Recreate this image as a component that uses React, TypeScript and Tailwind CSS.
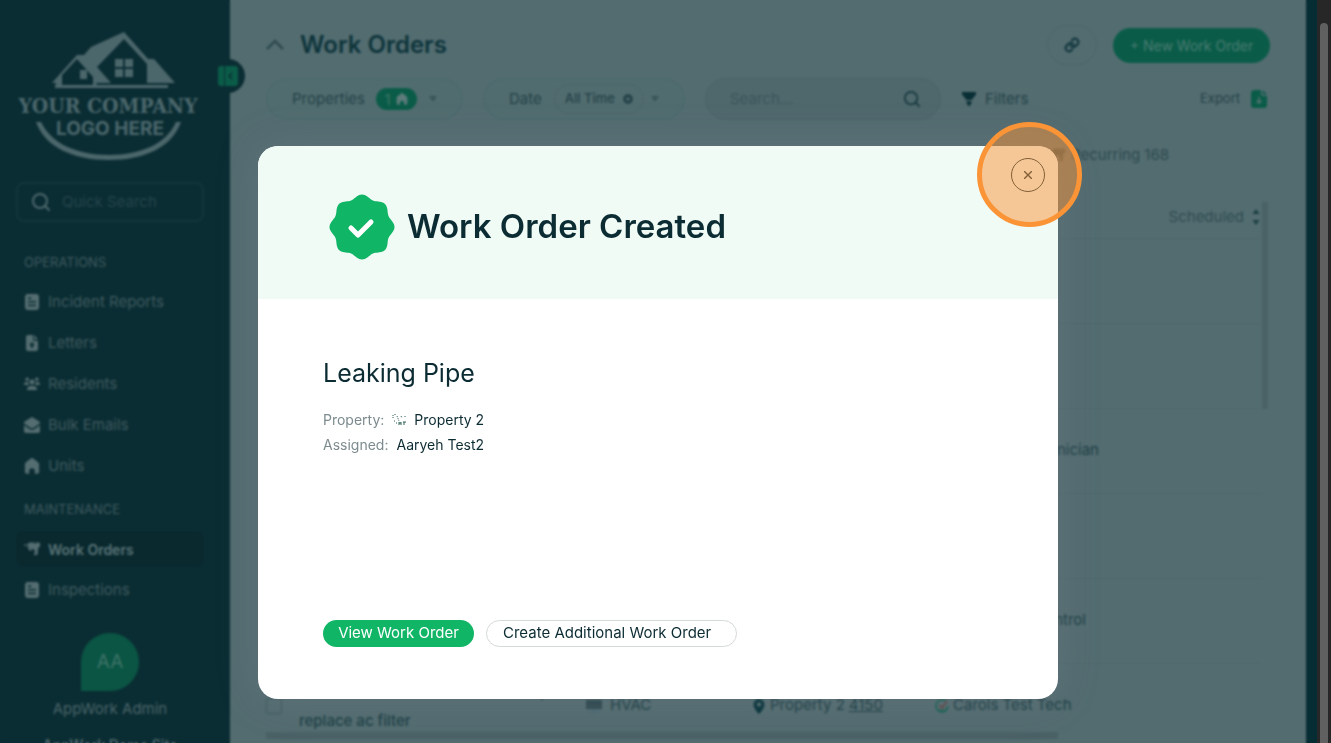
import React, { useState } from 'react';

type IconProps = { className?: string };

const ReportIcon = ({ className }: IconProps) => (
  <svg className={className} viewBox="0 0 16 16" fill="currentColor">
    <path fillRule="evenodd" d="M4 0h8a3 3 0 0 1 3 3v10a3 3 0 0 1-3 3H4a3 3 0 0 1-3-3V3a3 3 0 0 1 3-3zm0 3.500V5h3.500V3.500zM4 7v1.500h8V7zm0 3.700v1.500h8v-1.500z" />
  </svg>
);

const LetterIcon = ({ className }: IconProps) => (
  <svg className={className} viewBox="0 0 16 16" fill="currentColor">
    <path fillRule="evenodd" d="M4 0h5v4a2 2 0 0 0 2 2h3v8a2 2 0 0 1-2 2H4a2 2 0 0 1-2-2V2a2 2 0 0 1 2-2zm4 7-3 3.200h2V13h2v-2.800h2z" />
    <path d="M10 0l4 4.500h-3a1 1 0 0 1-1-1z" />
  </svg>
);

const ResidentsIcon = ({ className }: IconProps) => (
  <svg className={className} viewBox="0 0 16 16" fill="currentColor">
    <circle cx="3.200" cy="3.200" r="1.800" />
    <circle cx="12.800" cy="3.200" r="1.800" />
    <circle cx="8" cy="6" r="2.500" />
    <path d="M0 8.500C0 7 1 6 2.500 6h1.700c0 1.300.4 2.200 1.200 3H.5zM16 8.500C16 7 15 6 13.500 6h-1.700c0 1.300-.4 2.200-1.200 3h4.900zM3 13.500C3 11.300 4.600 10 6.500 10h3c1.900 0 3.500 1.300 3.500 3.500 0 .3-.2.5-.5.5h-9c-.3 0-.5-.2-.5-.5z" />
  </svg>
);

const MailIcon = ({ className }: IconProps) => (
  <svg className={className} viewBox="0 0 16 16" fill="currentColor">
    <path d="M8 0l7 4.200c.6.400 1 1 1 1.600v.700L9.200 11c-.8.500-1.600.500-2.400 0L0 6.500v-.7c0-.6.400-1.200 1-1.600zM0 8.300l6 4c1.300.8 2.700.8 4 0l6-4V14a2 2 0 0 1-2 2H2a2 2 0 0 1-2-2z" />
  </svg>
);

const HomeIcon = ({ className }: IconProps) => (
  <svg className={className} viewBox="0 0 16 16" fill="currentColor">
    <path d="M6.700.6a2 2 0 0 1 2.600 0l5 4c.5.400.8 1 .8 1.700V14a1.800 1.800 0 0 1-1.800 1.800h-2.500V13a2.800 2.800 0 0 0-5.600 0v2.800H2.700A1.800 1.800 0 0 1 .9 14V6.300c0-.7.300-1.300.8-1.700z" />
  </svg>
);

const DrillIcon = ({ className }: IconProps) => (
  <svg className={className} viewBox="0 0 16 16" fill="currentColor">
    <path d="M0 3.500h4V2.300L6 1.500h4.500v1.200h1.200V1.500H15a1 1 0 0 1 1 1v3.300l-1.800 1L13.500 14h-3.700l.4-2 1-.4L10 8.500 5 7.300 4 4.800H0z" />
    <path d="M3 6l3 4 2-.8-2-2.700z" />
  </svg>
);

const SearchIcon = ({ className }: IconProps) => (
  <svg className={className} viewBox="0 0 18 18" fill="none" stroke="currentColor" strokeWidth="2">
    <circle cx="8" cy="8" r="7" />
    <path d="M12.800 12.800L17 17" strokeLinecap="round" />
  </svg>
);

const ExportIcon = ({ className }: IconProps) => (
  <svg className={className} viewBox="0 0 16 18">
    <path d="M3.500 0H10v3.500A2.500 2.500 0 0 0 12.500 6H16v9a3 3 0 0 1-3 3H3a3 3 0 0 1-3-3V3.500A3.500 3.500 0 0 1 3.500 0zM11.500 0L16 4.500h-3A1.500 1.500 0 0 1 11.500 3z" fill="#0a5c48" />
    <path d="M8 7v6M5.500 10.700L8 13.200l2.500-2.500" fill="none" stroke="#52716f" strokeWidth="1.600" />
  </svg>
);

const CompanyLogo = () => (
  <svg className="w-[180px] h-[130px]" viewBox="0 0 180 130" fill="#4c676c" role="img" aria-label="Your company logo here">
    <path d="M106 0l24 27h6l21 24h-28V32L106 7 79 35l14 16H79l-2 4h-2V45L59 27 44 43v12h-6v-4h-4l25-28h7l7-8z" />
    <path d="M62 38h7v9h-7z" />
    <path d="M97 27h8v8h-8zM107 27h8v8h-8zM97 37h8v8h-8zM107 37h8v8h-8z" />
    <path d="M37 53h113v3H37z" />
    <text x="90" y="81" textAnchor="middle" fontSize="21" fontWeight="700" fontFamily="'DejaVu Serif Condensed', 'Liberation Serif', serif">YOUR COMPANY</text>
    <text x="92" y="103" textAnchor="middle" fontSize="19" fontWeight="700" fontFamily="Inter, sans-serif">LOGO HERE</text>
    <path d="M18 90h5c10 21 35 33 68 33s58-12 67-33h5c-9 25-36 38-72 38S27 115 18 90z" />
  </svg>
);

// eight-lobed seal outline around (33, 33)
const sealPath = () => {
  const pts: string[] = [];
  for (let i = 0; i < 144; i++) {
    const a = (i / 144) * Math.PI * 2;
    const r = 30.6 + 1.9 * Math.cos(8 * a);
    pts.push(`${(33 + r * Math.cos(a)).toFixed(2)} ${(33 + r * Math.sin(a)).toFixed(2)}`);
  }
  return `M${pts.join('L')}Z`;
};

const operations = [
  { label: 'Incident Reports', icon: ReportIcon },
  { label: 'Letters', icon: LetterIcon },
  { label: 'Residents', icon: ResidentsIcon },
  { label: 'Bulk Emails', icon: MailIcon },
  { label: 'Units', icon: HomeIcon },
];

const maintenance = [
  { label: 'Work Orders', icon: DrillIcon, active: true },
  { label: 'Inspections', icon: ReportIcon },
];

const rows = [
  { title: '', category: '', property: '', unit: '', assigned: '' },
  { title: '', category: '', property: '', unit: '', assigned: '' },
  { title: '', category: '', property: '', unit: '', assigned: 'AppWork Technician' },
  { title: '', category: '', property: '', unit: '', assigned: '' },
  { title: '', category: '', property: '', unit: '', assigned: 'Demo Pest Control' },
  { title: 'AC unit - need new one and clean,\nreplace ac filter', category: 'HVAC', property: 'Property 2', unit: '4150', assigned: 'Carols Test Tech' },
];

const NavGroup = ({ title, items }: { title: string; items: { label: string; icon: React.FC<IconProps>; active?: boolean }[] }) => (
  <div>
    <h2 className="px-2 text-[13px] leading-5 text-[#3f5a5f]">{title}</h2>
    <ul className="mt-3 space-y-[5px]">
      {items.map(({ label, icon: Icon, active }) => (
        <li key={label}>
          <a
            href="#"
            className={active
              ? 'flex items-center gap-2 h-9 px-2 rounded-lg text-[14px] font-semibold text-[#5b7477] bg-[#09292f]'
              : 'flex items-center gap-2 h-9 px-2 rounded-lg text-[15px] text-[#3f5a5f]'}
          >
            <Icon className="w-4 h-4 text-[#546d71]" />
            {label}
          </a>
        </li>
      ))}
    </ul>
  </div>
);

const Sidebar = () => (
  <aside className="relative w-[230px] shrink-0 bg-[#0a2d33] pl-4 pr-[26px] pt-8">
    <div className="flex -mr-2 ml-[2px]">
      <CompanyLogo />
    </div>
    <label className="mt-5 flex items-center gap-3 h-10 px-3.5 rounded-lg border-2 border-[#12363b]">
      <SearchIcon className="w-[18px] h-[18px] shrink-0 text-[#4c676c]" />
      <input className="w-full min-w-0 bg-transparent text-[15px] outline-none placeholder:text-[#24454b]" placeholder="Quick Search" aria-label="Quick Search" />
    </label>
    <nav className="mt-[30px] space-y-[15px]">
      <NavGroup title="OPERATIONS" items={operations} />
      <NavGroup title="MAINTENANCE" items={maintenance} />
    </nav>
    <div className="mt-[25px] flex flex-col items-center text-[15px] leading-5 text-[#4a6469]">
      <div className="flex items-center justify-center w-[58px] h-[58px] rounded-full rounded-bl-none bg-[#0a5544] text-[19px] text-[#3f7468]">AA</div>
      <p className="mt-2">AppWork Admin</p>
      <p className="mt-4 text-[14px] font-semibold whitespace-nowrap">AppWork Demo Site</p>
    </div>
    <button className="absolute z-10 top-[59px] -right-[15px] w-[34px] h-[34px] rounded-full bg-[#0a2d33] flex items-center justify-center" aria-label="Collapse menu">
      <svg className="w-5 h-5" viewBox="0 0 20 20">
        <path d="M3 0h3v20H3a3 3 0 0 1-3-3V3a3 3 0 0 1 3-3zM7 0h10a3 3 0 0 1 3 3v14a3 3 0 0 1-3 3H7z" fill="#0a5c48" />
        <path d="M14 7l-3 3 3 3" fill="none" stroke="#0a2d33" strokeWidth="1.500" />
      </svg>
    </button>
  </aside>
);

const Caret = () => (
  <svg className="w-2.5 h-2" viewBox="0 0 10 8" fill="#395559">
    <path d="M1 1h8L5 7z" />
  </svg>
);

const Toolbar = () => (
  <div className="mt-3 flex items-center h-[42px] text-[15px] text-[#234248]">
    <button className="flex items-center h-full w-[197px] shrink-0 pl-6 rounded-full border-2 border-[#4c6a6d] bg-[#516c6f]">
      Properties
      <span className="ml-[11px] flex items-center justify-center gap-1.5 w-[41px] h-[22px] rounded-full bg-[#0a5c48] text-[#3d7468] text-[14px]">
        1
        <HomeIcon className="w-3 h-3 text-[#5d7b7a]" />
      </span>
      <span className="ml-[11px]"><Caret /></span>
    </button>
    <button className="ml-5 flex items-center h-full w-[202px] shrink-0 pl-6 rounded-full border-2 border-[#4c6a6d] bg-[#516c6f]">
      Date
      <span className="ml-3 flex items-center justify-center gap-2 w-[90px] h-[30px] rounded-full border border-[#4b6468] text-[13px] font-medium">
        All Time
        <svg className="w-2.5 h-2.5" viewBox="0 0 10 10" fill="none" stroke="#234248" strokeWidth="3">
          <circle cx="5" cy="5" r="3.300" />
        </svg>
      </span>
      <span className="ml-1.5"><Caret /></span>
    </button>
    <label className="ml-5 flex items-center h-full w-[236px] shrink-0 pl-6 pr-5 rounded-full border border-[#4a6468] bg-[#4f686c]">
      <input className="flex-1 min-w-0 bg-transparent outline-none placeholder:text-[#3b565b]" placeholder="Search..." aria-label="Search work orders" />
      <SearchIcon className="w-4 h-4 text-[#173a40]" />
    </label>
    <button className="ml-5 flex items-center gap-2">
      <svg className="w-4 h-4" viewBox="0 0 16 16" fill="#082f35">
        <path d="M1 1h14v2.500L10.500 9h-5L1 3.500zM5.500 10.200h5V12L8 15.500 5.500 12z" />
      </svg>
      Filters
    </button>
    <button className="ml-auto mr-[3px] flex items-center gap-[11px] text-[13px]">
      Export
      <ExportIcon className="w-4 h-[18px]" />
    </button>
  </div>
);

const OrdersTable = () => (
  <table className="w-full table-fixed text-[15px] text-[#1c3f45]">
    <colgroup>
      <col className="w-[33px]" />
      <col className="w-[287px]" />
      <col className="w-[166px]" />
      <col className="w-[183px]" />
      <col className="w-[183px]" />
      <col />
    </colgroup>
    <thead>
      <tr className="h-[42px] border-b border-[#4e676b]">
        <th colSpan={5} />
        <th className="p-0 font-normal text-[#304d52]">
          <span className="flex items-center justify-end gap-2">
            Scheduled
            <svg className="w-2 h-[18px]" viewBox="0 0 8 18" fill="#1c3f45">
              <path d="M4 1l3.500 5h-7zM.5 12h7L4 17z" />
            </svg>
          </span>
        </th>
      </tr>
    </thead>
    <tbody>
      {rows.map((row, i) => (
        <tr key={i} className="h-[85px] border-b border-[#4e676b]">
          <td>
            <input type="checkbox" className="block appearance-none w-4 h-4 border border-[#3b5a5e] rounded-xs" aria-label="Select work order" />
          </td>
          <td className="whitespace-pre leading-[29px] font-medium">{row.title}</td>
          <td>
            {row.category && (
              <span className="flex items-center gap-2">
                <svg className="w-4 h-4" viewBox="0 0 16 16">
                  <path d="M0 2h16v9H0z" fill="#2c474d" />
                  <path d="M1 8h14" stroke="#3c575c" />
                  <path d="M4 13l1 2M8 12v3M12 13l-1 2" stroke="#3c6078" />
                </svg>
                {row.category}
              </span>
            )}
          </td>
          <td>
            {row.property && (
              <span className="flex items-center gap-1">
                <svg className="w-[14px] h-4" viewBox="0 0 14 16">
                  <path fillRule="evenodd" d="M7 1a5.500 5.500 0 0 1 5.500 5.500C12.500 10 9 14 7 16 5 14 1.500 10 1.500 6.500A5.500 5.500 0 0 1 7 1zm0 3.500a2 2 0 1 0 0 4 2 2 0 0 0 0-4z" fill="#06343a" />
                </svg>
                {row.property} <a href="#" className="underline">{row.unit}</a>
              </span>
            )}
          </td>
          <td>
            {row.assigned && (
              <span className="flex items-center gap-1 whitespace-nowrap">
                <svg className="w-[14px] h-[14px] shrink-0" viewBox="0 0 14 14" fill="none">
                  <path d="M10.500 2A6 6 0 1 0 13 7" stroke="#16604f" strokeWidth="1.500" />
                  <path d="M4.500 6L7 9l5-7" stroke="#5f4a48" strokeWidth="2" />
                  <path d="M3 10c2 2 6 2 8 0" stroke="#16604f" />
                </svg>
                {row.assigned}
              </span>
            )}
          </td>
          <td />
        </tr>
      ))}
    </tbody>
  </table>
);

const WorkOrdersPage = () => (
  <main className="flex-1 min-w-0 flex flex-col bg-[#536c70] px-9 pt-6">
    <header className="flex items-center h-[42px] shrink-0">
      <svg className="w-[18px] h-[18px]" viewBox="0 0 18 18" fill="none" stroke="#2e4b50" strokeWidth="2.500">
        <path d="M1 13l8-8 8 8" />
      </svg>
      <h1 className="ml-4 text-[24px] font-semibold text-[#0d343b]">Work Orders</h1>
      <button className="ml-auto flex items-center justify-center w-[50px] h-10 rounded-full border border-[#4c6569]" aria-label="Copy link">
        <svg className="w-4 h-4" viewBox="0 0 24 24" fill="none" stroke="#0d343b" strokeWidth="3" strokeLinecap="round">
          <path d="M10 13a5 5 0 0 0 7.500.5l3-3a5 5 0 0 0-7-7l-1.700 1.700" />
          <path d="M14 11a5 5 0 0 0-7.500-.5l-3 3a5 5 0 0 0 7 7l1.700-1.700" />
        </svg>
      </button>
      <button className="ml-4 w-[157px] h-[35px] rounded-full bg-[#0a5c48] text-[14px] text-[#4a7b73]">+ New Work Order</button>
    </header>
    <Toolbar />
    <div className="mt-[23px] shrink-0 flex justify-end pr-[101px] h-6 text-[15px] text-[#2c4a4f]">
      <a href="#" className="flex items-center gap-1.5">
        <DrillIcon className="w-4 h-4" />
        Recurring 168
      </a>
    </div>
    <div className="mt-[29px] flex-1 min-h-0 flex gap-0.5 overflow-hidden">
      <div className="flex-1 min-w-0">
        <OrdersTable />
      </div>
      <div className="mt-[6px] mr-0.5 w-1.5 h-[207px] bg-[#4a6266]" />
    </div>
    <div className="mb-1 mr-[212px] h-[7px] shrink-0 bg-[#4a6266]" />
  </main>
);

const CreatedDialog = ({ onClose }: { onClose: () => void }) => (
  <div role="dialog" aria-labelledby="created-title" className="flex flex-col w-[800px] h-[553px] rounded-[20px] bg-white shadow-[0_0_40px_rgba(130,130,150,0.25)] text-[#0c2c33]">
    <div className="relative shrink-0 flex items-center gap-3 h-[153px] pl-[71px] pb-2 pt-4 rounded-t-[20px] bg-[#f1fbf6]">
      <svg className="w-[66px] h-[66px]" viewBox="0 0 66 66">
        <path d={sealPath()} fill="#10b566" />
        <path d="M22 34l7 7 13-13" fill="none" stroke="#fff" strokeWidth="5" strokeLinecap="round" strokeLinejoin="round" />
      </svg>
      <h2 id="created-title" className="text-[33px] font-semibold">Work Order Created</h2>
      <button onClick={onClose} className="absolute top-3 right-[13px] flex items-center justify-center w-[34px] h-[34px] rounded-full border border-[#0c2c33]" aria-label="Close">
        <svg className="w-2 h-2" viewBox="0 0 8 8" fill="none" stroke="#0c2c33" strokeWidth="1.400">
          <path d="M0 0l8 8M8 0L0 8" />
        </svg>
      </button>
      {/* click marker */}
      <div className="absolute -top-6 -right-6 w-[105px] h-[105px] rounded-full border-[5px] border-[#fa9437] bg-[#fa9437]/50 pointer-events-none" />
    </div>
    <div className="flex-1 flex flex-col px-[65px] pt-14 pb-[52px]">
      <h3 className="text-[25px] leading-9">Leaking Pipe</h3>
      <dl className="mt-4 text-[14px] leading-[25px]">
        <div className="flex items-center gap-2">
          <dt className="text-[#7d8b8f]">Property:</dt>
          <dd className="flex items-center gap-2">
            <svg className="w-[14px] h-3" viewBox="0 0 14 12" fill="none" stroke="#2d6157">
              <path d="M1 1v4M3 0v2M2 7h2M5 2l2 5M9 2l1 2M4 9h2" strokeDasharray="1 1" />
              <path d="M7 8v3M9 8v3M7 9h2M11 8h3M12 8v3M13 2v1" />
            </svg>
            Property 2
          </dd>
        </div>
        <div className="flex gap-2">
          <dt className="text-[#7d8b8f]">Assigned:</dt>
          <dd>Aaryeh Test2</dd>
        </div>
      </dl>
      <div className="mt-auto flex gap-3 text-[15px]">
        <button className="w-[151px] h-[27px] rounded-full bg-[#10b566] text-white">View Work Order</button>
        <button className="w-[251px] h-[27px] pl-4 text-left rounded-full border border-[#d5d9da]">Create Additional Work Order</button>
      </div>
    </div>
  </div>
);

export default function App() {
  const [open, setOpen] = useState(true);

  return (
    <div className="flex h-screen overflow-hidden font-['Inter',sans-serif]">
      <div className="relative flex flex-1 min-w-0">
        <Sidebar />
        <WorkOrdersPage />
        <div className="w-[11px] shrink-0 bg-[#062d33]" />
        {open && (
          <div className="absolute inset-0 z-20 flex justify-center items-start pt-[146px] pr-px backdrop-blur-[1px]">
            <CreatedDialog onClose={() => setOpen(false)} />
          </div>
        )}
      </div>
      {/* window scrollbar */}
      <div className="w-[14px] shrink-0 flex justify-center bg-[#272727] pt-[23px]">
        <div className="w-2 rounded-t bg-[#606060]" />
      </div>
    </div>
  );
}
